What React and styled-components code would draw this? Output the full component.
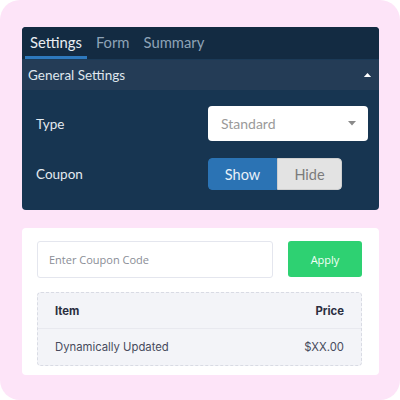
import React from "react";
import styled, { createGlobalStyle } from "styled-components";

const Global = createGlobalStyle`
  html, body { margin: 0; padding: 0; background: #ffffff; }
  * { box-sizing: border-box; }
`;

const Frame = styled.div`
  width: 400px;
  height: 400px;
  background: #fde4f8;
  border-radius: 20px;
  padding: 27px 21px 0 22px;
  display: flex;
  flex-direction: column;
  gap: 18px;
`;

const Panel = styled.div`
  background: #173551;
  border-radius: 4px;
  overflow: hidden;
  font-family: Lato, "Open Sans", sans-serif;
`;

const Tabs = styled.div`
  height: 33px;
  background: #132b42;
  display: flex;
  padding-left: 3px;
  border-bottom: 1px solid #1b3a57;
`;

const Tab = styled.div`
  padding: 0 5px;
  margin-right: 4px;
  font-size: 14.8px;
  line-height: 30px;
  color: ${(p) => (p.$active ? "#e9eef3" : "#8ea3b7")};
  border-bottom: 3px solid ${(p) => (p.$active ? "#2e79bd" : "transparent")};
`;

const Header = styled.div`
  height: 30px;
  background: #243c56;
  display: flex;
  align-items: center;
  justify-content: space-between;
  padding: 0 7px 0 6px;
  color: #dfe6ed;
  font-size: 13.5px;
`;

const Body = styled.div`
  padding: 16px 11px 20px 14px;
  display: flex;
  flex-direction: column;
  gap: 17px;
`;

const Row = styled.div`
  display: flex;
  align-items: center;
`;

const Label = styled.div`
  width: 172px;
  color: #e4eaf0;
  font-size: 13.5px;
`;

const Select = styled.div`
  width: 160px;
  height: 35px;
  background: #ffffff;
  border-radius: 4px;
  display: flex;
  align-items: center;
  justify-content: space-between;
  padding: 0 12px 0 13px;
  color: #9a9a9a;
  font-size: 14px;
`;

const Toggle = styled.div`
  display: flex;
  height: 32px;
  border-radius: 4px;
  overflow: hidden;
`;

const ToggleBtn = styled.div`
  width: ${(p) => p.$w}px;
  display: flex;
  align-items: center;
  justify-content: center;
  font-size: 14.5px;
  background: ${(p) => (p.$active ? "#2b73b4" : "#e3e3e3")};
  color: ${(p) => (p.$active ? "#e8f0f8" : "#7b7b7b")};
  border: 1px solid ${(p) => (p.$active ? "#2b73b4" : "#cfcfcf")};
  border-radius: ${(p) => (p.$active ? "4px 0 0 4px" : "0 4px 4px 0")};
`;

const Card = styled.div`
  background: #ffffff;
  border-radius: 4px;
  padding: 13px 17px 9px 15px;
  display: flex;
  flex-direction: column;
  gap: 14px;
`;

const CouponRow = styled.div`
  display: flex;
  gap: 15px;
`;

const Input = styled.div`
  flex: 1;
  height: 37px;
  border: 1px solid #e4e6ee;
  border-radius: 3px;
  display: flex;
  align-items: center;
  padding-left: 11px;
  color: #8a8d96;
  font-family: "Open Sans", sans-serif;
  font-size: 11px;
`;

const ApplyBtn = styled.div`
  width: 74px;
  height: 36px;
  background: #2ed172;
  border-radius: 3px;
  display: flex;
  align-items: center;
  justify-content: center;
  color: #f2fff7;
  font-family: "Open Sans", sans-serif;
  font-size: 11px;
`;

const Table = styled.div`
  background: #f3f4f8;
  border: 1px dashed #d9dbe4;
  border-radius: 4px;
  font-family: Inter, "Open Sans", sans-serif;
`;

const TRow = styled.div`
  display: flex;
  justify-content: space-between;
  align-items: center;
  height: 36px;
  padding: 0 17px 0 17px;
  font-size: 11.3px;
  font-weight: ${(p) => (p.$head ? 700 : 400)};
  color: ${(p) => (p.$head ? "#2a2e40" : "#474b5c")};
  border-bottom: ${(p) => (p.$head ? "1px solid #e8e9ef" : "none")};
`;

const Caret = ({ up, color, size = 8 }) => (
  <svg width={size} height={size * 0.55} viewBox="0 0 10 5.5">
    <path d={up ? "M0 5.5 L5 0 L10 5.5 Z" : "M0 0 L5 5.5 L10 0 Z"} fill={color} />
  </svg>
);

export default function App() {
  return (
    <>
      <Global />
      <Frame>
        <Panel>
          <Tabs>
            <Tab $active>Settings</Tab>
            <Tab>Form</Tab>
            <Tab>Summary</Tab>
          </Tabs>
          <Header>
            <span>General Settings</span>
            <Caret up color="#ffffff" size={9} />
          </Header>
          <Body>
            <Row>
              <Label>Type</Label>
              <Select>
                <span>Standard</span>
                <Caret color="#8a8a8a" size={8} />
              </Select>
            </Row>
            <Row>
              <Label>Coupon</Label>
              <Toggle>
                <ToggleBtn $active $w={69}>Show</ToggleBtn>
                <ToggleBtn $w={65}>Hide</ToggleBtn>
              </Toggle>
            </Row>
          </Body>
        </Panel>
        <Card>
          <CouponRow>
            <Input>Enter Coupon Code</Input>
            <ApplyBtn>Apply</ApplyBtn>
          </CouponRow>
          <Table>
            <TRow $head>
              <span>Item</span>
              <span>Price</span>
            </TRow>
            <TRow>
              <span>Dynamically Updated</span>
              <span>$XX.00</span>
            </TRow>
          </Table>
        </Card>
      </Frame>
    </>
  );
}
